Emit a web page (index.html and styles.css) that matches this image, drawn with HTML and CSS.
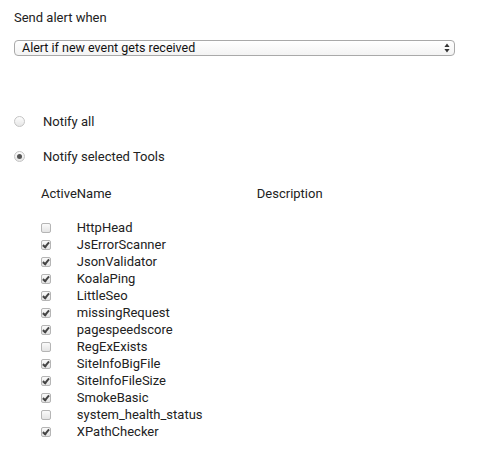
FILE: index.html
```html
<!DOCTYPE html>
<html>
<head>
<meta charset="utf-8">
<link rel="stylesheet" href="styles.css">
</head>
<body>
<div class="page">
  <div class="field-label">Send alert when</div>
  <div class="select-wrap">
    <div class="select">Alert if new event gets received</div>
    <svg class="arrows" width="6" height="10" viewBox="0 0 6 10"><path d="M3 0.5 L5.6 4 L0.4 4 Z M3 9.5 L5.6 6 L0.4 6 Z" fill="#333"/></svg>
  </div>

  <div class="radios">
    <div class="radio-row"><span class="radio"></span><span class="radio-label">Notify all</span></div>
    <div class="radio-row"><span class="radio on"></span><span class="radio-label">Notify selected Tools</span></div>
  </div>

  <table class="tools">
    <thead>
      <tr><th class="c-active">Active</th><th class="c-name">Name</th><th class="c-desc">Description</th></tr>
    </thead>
    <tbody>
      <tr><td><span class="cb"></span></td><td>HttpHead</td><td></td></tr>
      <tr><td><span class="cb on"></span></td><td>JsErrorScanner</td><td></td></tr>
      <tr><td><span class="cb on"></span></td><td>JsonValidator</td><td></td></tr>
      <tr><td><span class="cb on"></span></td><td>KoalaPing</td><td></td></tr>
      <tr><td><span class="cb on"></span></td><td>LittleSeo</td><td></td></tr>
      <tr><td><span class="cb on"></span></td><td>missingRequest</td><td></td></tr>
      <tr><td><span class="cb on"></span></td><td>pagespeedscore</td><td></td></tr>
      <tr><td><span class="cb"></span></td><td>RegExExists</td><td></td></tr>
      <tr><td><span class="cb on"></span></td><td>SiteInfoBigFile</td><td></td></tr>
      <tr><td><span class="cb on"></span></td><td>SiteInfoFileSize</td><td></td></tr>
      <tr><td><span class="cb on"></span></td><td>SmokeBasic</td><td></td></tr>
      <tr><td><span class="cb"></span></td><td>system_health_status</td><td></td></tr>
      <tr><td><span class="cb on"></span></td><td>XPathChecker</td><td></td></tr>
    </tbody>
  </table>
</div>
</body>
</html>
```
FILE: styles.css
```css
html, body {
  margin: 0;
  padding: 0;
  background: #fff;
}
body {
  font-family: Roboto, "Liberation Sans", sans-serif;
  font-size: 13px;
  color: #222;
}
.page {
  padding: 10px 29px 0 14px;
}
.field-label {
  line-height: 16px;
  margin-bottom: 14px;
}
.select-wrap {
  position: relative;
  width: 441px;
}
.select {
  box-sizing: border-box;
  height: 16px;
  border: 1px solid #a9a9a9;
  border-radius: 4px;
  background: linear-gradient(#fff, #f3f3f3);
  padding-left: 7px;
  font-size: 12.5px;
  line-height: 14px;
  color: #111;
}
.arrows {
  position: absolute;
  right: 5px;
  top: 3px;
}
.radios {
  margin-top: 56px;
}
.radio-row {
  display: flex;
  align-items: center;
  height: 18px;
  margin-bottom: 17px;
}
.radio {
  box-sizing: border-box;
  width: 11px;
  height: 11px;
  border-radius: 50%;
  border: 1px solid #c4c4c4;
  background: linear-gradient(#fdfdfd, #e6e6e6);
  margin-right: 18px;
  display: flex;
  align-items: center;
  justify-content: center;
}
.radio.on::after {
  content: "";
  width: 5px;
  height: 5px;
  border-radius: 50%;
  background: #555;
}
.tools {
  border-collapse: collapse;
  margin-left: 27px;
  margin-top: 20px;
}
.tools th {
  font-weight: normal;
  text-align: left;
  padding: 0;
  height: 18px;
  line-height: 18px;
  padding-bottom: 16px;
}
.c-active { width: 35px; }
.c-name { width: 180px; }
.tools td {
  padding: 0;
  height: 17px;
  line-height: 17px;
  vertical-align: middle;
}
.cb {
  display: block;
  box-sizing: border-box;
  width: 10px;
  height: 10px;
  border: 1px solid #b5b5b5;
  border-radius: 2px;
  background: linear-gradient(#fafafa, #e4e4e4);
  position: relative;
}
.cb.on::after {
  content: "";
  position: absolute;
  left: 2px;
  top: 0px;
  width: 2px;
  height: 5px;
  border: solid #444;
  border-width: 0 2px 2px 0;
  transform: rotate(40deg);
}
```
